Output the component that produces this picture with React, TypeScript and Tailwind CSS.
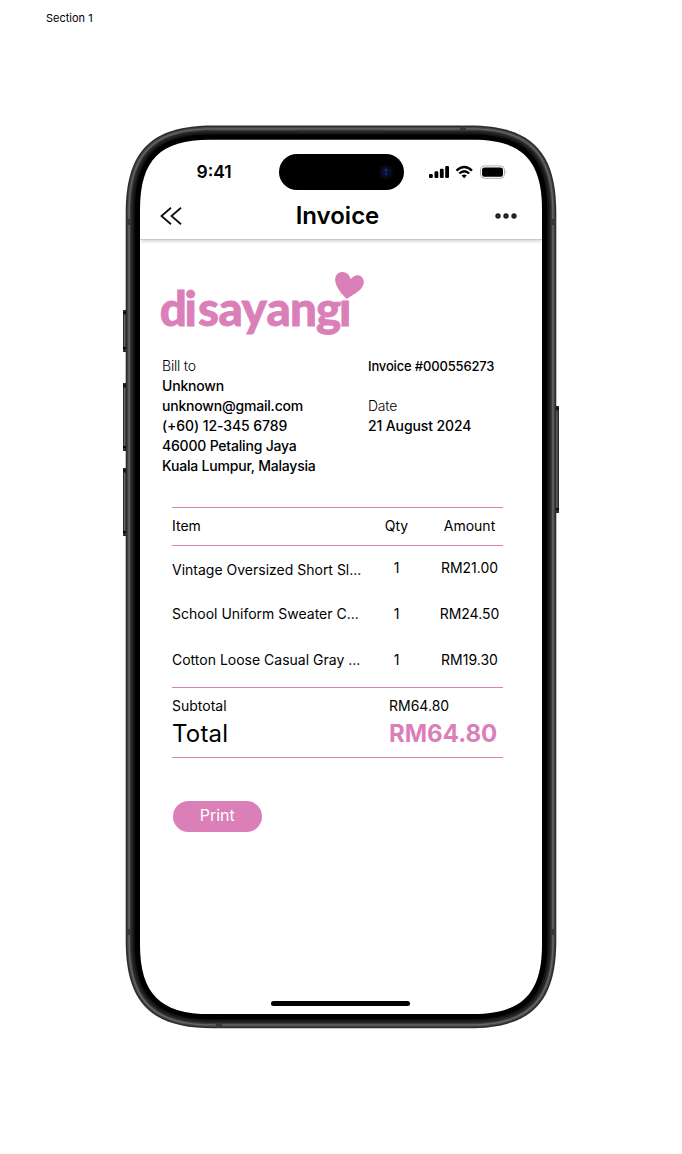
const items = [
  { name: "Vintage Oversized Short Sl...", qty: "1", amount: "RM21.00", top: "", side: "-mt-[2px]" },
  { name: "School Uniform Sweater C...", qty: "1", amount: "RM24.50", top: "mt-[20px]", side: "" },
  { name: "Cotton Loose Casual Gray ...", qty: "1", amount: "RM19.30", top: "mt-[22px]", side: "" },
];

// Outline of the phone body, inset by the given number of pixels.
const bodyPath = (inset: number) => {
  const l = 125.7 + inset;
  const r = 556.3 - inset;
  const t = 125.5 + inset;
  const b = 1028.3 - inset;
  const e = (70 - inset) * 1.25;
  const k = e * 0.291;
  return `M${l + e} ${t}H${r - e}C${r - k} ${t} ${r} ${t + k} ${r} ${t + e}V${b - e}C${r} ${b - k} ${r - k} ${b} ${r - e} ${b}H${l + e}C${l + k} ${b} ${l} ${b - k} ${l} ${b - e}V${t + e}C${l} ${t + k} ${l + k} ${t} ${l + e} ${t}Z`;
};

function SideButton({ x, y, h }: { x: number; y: number; h: number }) {
  return (
    <g>
      <rect x={x} y={y} width="4" height={h} fill="#2c2e2e" />
      <rect x={x + 1} y={y + 5} width="1.5" height={h - 10} fill="#686a67" />
      <rect x={x} y={y + 1.5} width="4" height="2" fill="#080808" />
      <rect x={x} y={y + h - 5} width="4" height="2" fill="#080808" />
    </g>
  );
}

function Device() {
  return (
    <svg className="pointer-events-none absolute inset-0" width="682" height="1154" viewBox="0 0 682 1154" aria-hidden="true">
      <SideButton x={123} y={310} h={42} />
      <SideButton x={123} y={383} h={68} />
      <SideButton x={123} y={468} h={68} />
      <SideButton x={555} y={406} h={107} />
      <path d={bodyPath(0)} fill="#2b2c2b" />
      <path d={bodyPath(1.5)} fill="#454645" />
      <path d={bodyPath(2.7)} fill="#646664" />
      <path d={bodyPath(4)} fill="#444544" />
      <path d={bodyPath(5)} fill="#252625" />
      <path d={bodyPath(7)} fill="#151515" />
      <path d={bodyPath(9)} fill="#000000" />
      <path d={bodyPath(14.3)} fill="#ffffff" />
      <path d="M299 132.5H383" stroke="#252727" />
      <path d="M460 126v5h6v-5zM216 1023v5h6v-5zM126 219v6h5v-6zM551 219v6h5v-6zM126 929v6h5v-6zM551 929v6h5v-6z" fill="#353838" />
    </svg>
  );
}

function StatusIcons() {
  return (
    <svg width="80" height="16" viewBox="428 164 80 16" aria-hidden="true">
      <g fill="#000">
        <rect x="429" y="174" width="3.8" height="4" rx="1.1" />
        <rect x="434.5" y="171.3" width="3.8" height="6.7" rx="1.1" />
        <rect x="439.9" y="168.8" width="3.8" height="9.2" rx="1.1" />
        <rect x="445.2" y="166" width="3.8" height="12" rx="1.1" />
        <rect x="482" y="167.4" width="21" height="9.4" rx="2.8" />
      </g>
      <g fill="none" stroke="#000" strokeWidth="2.3">
        <path d="M456.5 170.6Q464.2 163.4 472 170.6" />
        <path d="M459.3 173.5Q464.2 169.1 469.2 173.5" />
      </g>
      <path d="M461.6 175.6Q464.2 173.6 466.8 175.6L464.2 178.2Z" />
      <rect x="480.5" y="165.9" width="24" height="12.4" rx="4" fill="none" stroke="#b0b0b0" />
      <path d="M505.7 170.2Q507.2 172 505.7 173.8Z" fill="#a8a8a8" />
    </svg>
  );
}

function Logo() {
  return (
    <svg className="block" width="206" height="72" viewBox="160 270 206 72" role="img">
      <text x="159.8 184.6 198 218.5 241.5 266.5 290 316 339" y="325.5" fontFamily="Lato, sans-serif" fontWeight="900" fontSize="47.5" fill="#da7fb7" stroke="#da7fb7" strokeWidth="0.8">disayangi</text>
      <rect x="341" y="284" width="16" height="16" fill="#fff" />
      <path d="M346.7 299C341.5 293.5 335.6 287 335.2 280.5C334.7 275.3 338.4 272 342 272C346 272 349.6 274.5 350.6 279.2C353 276 355.5 275 358 275.2C361.7 275.6 364 278.7 363.8 282.6C363.4 289.8 355 293.5 346.7 299Z" fill="#da7fb7" />
    </svg>
  );
}

export default function App() {
  return (
    <main className="relative h-[1154px] w-[682px] overflow-hidden bg-white font-['Inter',sans-serif] text-black">
      <Device />
      <p className="relative pt-[10px] pl-[46px] text-[11px] leading-4">Section 1</p>
      <section className="relative mt-[114px] ml-[140px] flex h-[874px] w-[402px] flex-col">
        <header className="flex h-[100px] flex-col rounded-t-[62px] border-b border-[#c8c8c8] shadow-[0_3px_3px_-1px_rgba(0,0,0,0.14)]">
          <div className="flex h-[50px] shrink-0 items-end">
            <span className="mb-[7px] ml-[56.5px] w-[82px] text-[17.5px] leading-[22px] font-semibold">9:41</span>
            <div className="flex h-[36px] w-[125px] items-center justify-end rounded-full bg-black pr-[11px]">
              <svg width="14" height="14" viewBox="0 0 14 14"><circle cx="7" cy="7" r="7" fill="#090711" /><circle cx="7" cy="7" r="5" fill="#0b0d30" /><circle cx="7" cy="5" r="1.5" fill="#1c2b73" /><circle cx="7" cy="9" r="1.2" fill="#172565" /></svg>
            </div>
            <div className="mb-[10px] ml-[24px]"><StatusIcons /></div>
          </div>
          <div className="flex h-[49px] items-center justify-between pt-[3px] pr-[25px] pl-[20px]">
            <svg width="22" height="18" viewBox="0 0 22 18" fill="none" stroke="#111" strokeWidth="1.8"><path d="M11 .8 1.5 9 11 17.2M21 .8 11.5 9l9.5 8.2" /></svg>
            <h1 className="mr-[2px] text-[24px] leading-[30px] font-semibold">Invoice</h1>
            <svg width="22" height="6" viewBox="0 0 22 6" fill="#24222a"><circle cx="3" cy="3" r="2.7" /><circle cx="11" cy="3" r="2.7" /><circle cx="19" cy="3" r="2.7" /></svg>
          </div>
        </header>
        <div className="mt-[30px] ml-[20px]"><Logo /></div>
        <div className="mt-[14px] ml-[22px] flex text-[14px] leading-[20px] tracking-[-0.2px]">
          <address className="w-[206px] font-medium not-italic">
            <p className="font-light">Bill to</p>
            <p>Unknown</p>
            <p>unknown@gmail.com</p>
            <p className="tracking-[-0.08px]">(+60) 12-345 6789</p>
            <p>46000 Petaling Jaya</p>
            <p>Kuala Lumpur, Malaysia</p>
          </address>
          <div className="font-medium">
            <p className="text-[13px] tracking-[-0.16px]">Invoice #000556273</p>
            <p className="mt-[20px] font-light">Date</p>
            <p className="tracking-[-0.12px]">21 August 2024</p>
          </div>
        </div>
        <div className="mt-[31px] ml-[32px] w-[331px] text-[14px] leading-[24px]">
          <div className="flex h-[39px] items-center border-y border-[#da7fb7] pb-[2px]">
            <span className="w-[201px]">Item</span>
            <span className="w-[47px] text-center">Qty</span>
            <span className="ml-[16px] flex-1 text-center">Amount</span>
          </div>
          <div className="h-[141px] pt-[12px]">
            {items.map((item) => (
              <div key={item.name} className={`flex h-[24px] ${item.top}`}>
                <span className="w-[201px]">{item.name}</span>
                <span className={`w-[47px] text-center ${item.side}`}>{item.qty}</span>
                <span className={`ml-[16px] flex-1 text-center ${item.side}`}>{item.amount}</span>
              </div>
            ))}
          </div>
          <div className="h-[71px] border-y border-[#da7fb7] pt-[6px]">
            <div className="flex"><span className="w-[217px]">Subtotal</span><span>RM64.80</span></div>
            <div className="mt-px flex text-[24px] leading-[30px]"><span className="w-[217px] tracking-[0.2px]">Total</span><strong className="text-[#da7fb7]">RM64.80</strong></div>
          </div>
          <button className="mt-[42.5px] ml-[0.5px] flex h-[31px] w-[89.5px] items-center justify-center rounded-full bg-[#da7fb7] pb-[2px] text-[16px] text-white">Print</button>
        </div>
        <div className="mt-auto mr-[2px] mb-[8px] h-[5px] w-[139px] self-center rounded-full bg-black" />
      </section>
    </main>
  );
}
